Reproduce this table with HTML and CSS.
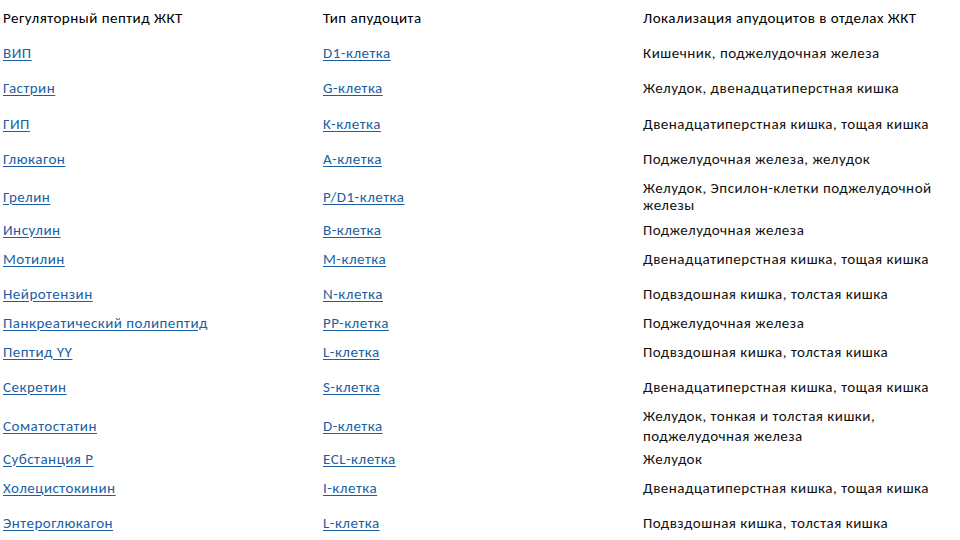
FILE: index.html
```html
<!DOCTYPE html>
<html lang="ru">
<head>
<meta charset="utf-8">
<title>Регуляторные пептиды ЖКТ</title>
<link rel="stylesheet" href="styles.css">
</head>
<body>
<div class="table">
  <div class="cell head">Регуляторный пептид ЖКТ</div>
  <div class="cell head">Тип апудоцита</div>
  <div class="cell head">Локализация апудоцитов в отделах ЖКТ</div>

  <div class="cell"><a href="#">ВИП</a></div>
  <div class="cell"><a href="#">D1-клетка</a></div>
  <div class="cell loc">Кишечник, поджелудочная железа</div>

  <div class="cell"><a href="#">Гастрин</a></div>
  <div class="cell"><a href="#">G-клетка</a></div>
  <div class="cell loc">Желудок, двенадцатиперстная кишка</div>

  <div class="cell"><a href="#">ГИП</a></div>
  <div class="cell"><a href="#">K-клетка</a></div>
  <div class="cell loc">Двенадцатиперстная кишка, тощая кишка</div>

  <div class="cell"><a href="#">Глюкагон</a></div>
  <div class="cell"><a href="#">A-клетка</a></div>
  <div class="cell loc">Поджелудочная железа, желудок</div>

  <div class="cell"><a href="#">Грелин</a></div>
  <div class="cell"><a href="#">P/D1-клетка</a></div>
  <div class="cell loc">Желудок, Эпсилон-клетки поджелудочной<br>железы</div>

  <div class="cell"><a href="#">Инсулин</a></div>
  <div class="cell"><a href="#">B-клетка</a></div>
  <div class="cell loc">Поджелудочная железа</div>

  <div class="cell"><a href="#">Мотилин</a></div>
  <div class="cell"><a href="#">M-клетка</a></div>
  <div class="cell loc">Двенадцатиперстная кишка, тощая кишка</div>

  <div class="cell"><a href="#">Нейротензин</a></div>
  <div class="cell"><a href="#">N-клетка</a></div>
  <div class="cell loc">Подвздошная кишка, толстая кишка</div>

  <div class="cell"><a href="#">Панкреатический полипептид</a></div>
  <div class="cell"><a href="#">PP-клетка</a></div>
  <div class="cell loc">Поджелудочная железа</div>

  <div class="cell"><a href="#">Пептид YY</a></div>
  <div class="cell"><a href="#">L-клетка</a></div>
  <div class="cell loc">Подвздошная кишка, толстая кишка</div>

  <div class="cell"><a href="#">Секретин</a></div>
  <div class="cell"><a href="#">S-клетка</a></div>
  <div class="cell loc">Двенадцатиперстная кишка, тощая кишка</div>

  <div class="cell"><a href="#">Соматостатин</a></div>
  <div class="cell"><a href="#">D-клетка</a></div>
  <div class="cell loc wide">Желудок, тонкая и толстая кишки,<br>поджелудочная железа</div>

  <div class="cell"><a href="#">Субстанция P</a></div>
  <div class="cell"><a href="#">ECL-клетка</a></div>
  <div class="cell loc">Желудок</div>

  <div class="cell"><a href="#">Холецистокинин</a></div>
  <div class="cell"><a href="#">I-клетка</a></div>
  <div class="cell loc">Двенадцатиперстная кишка, тощая кишка</div>

  <div class="cell"><a href="#">Энтероглюкагон</a></div>
  <div class="cell"><a href="#">L-клетка</a></div>
  <div class="cell loc">Подвздошная кишка, толстая кишка</div>
</div>
</body>
</html>
```

FILE: styles.css
```css
html, body {
  margin: 0;
  padding: 0;
  background: #ffffff;
}

body {
  width: 960px;
  height: 540px;
  overflow: hidden;
  font-family: Carlito, Lato, "Liberation Sans", sans-serif;
  font-size: 15px;
  font-weight: 300;
  line-height: 17px;
  letter-spacing: 0.5px;
  color: #111111;
}

.table {
  display: grid;
  grid-template-columns: 320px 320px 320px;
  grid-template-rows: 36px 34px 36px 36px 34px 42px 24px 34px 36px 22px 36px 34px 44px 22px 36px 34px;
}

.cell {
  align-self: center;
  padding-left: 3px;
  white-space: nowrap;
}

.head {
  color: #000000;
}

.loc {
  color: #111111;
}

.wide {
  line-height: 20px;
}

.cell a {
  color: #1a5fa3;
  text-decoration: underline;
  text-decoration-thickness: 1px;
  text-underline-offset: 2px;
}
```
